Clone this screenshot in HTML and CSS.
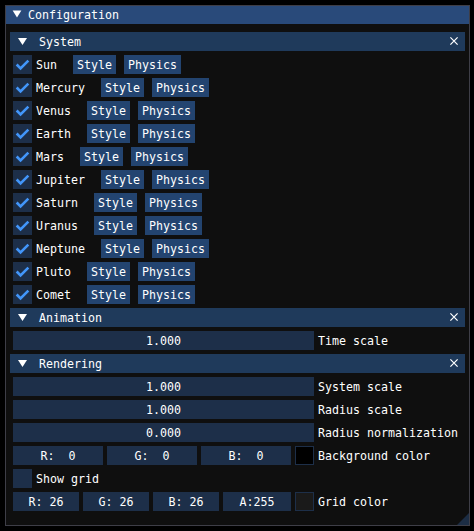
FILE: index.html
```html
<!DOCTYPE html>
<html>
<head>
<meta charset="utf-8">
<link rel="stylesheet" href="styles.css">
</head>
<body>
<div class="window">
  <div class="titlebar">
    <svg class="tri title-tri" width="13" height="13" viewBox="0 0 13 13"><polygon points="1.6,2.5 10.4,2.5 6,9.6" fill="#fff"/></svg>
    <span class="title-text">Configuration</span>
  </div>
  <div class="content">
    <div class="header">
      <svg class="tri head-tri" width="13" height="13" viewBox="0 0 13 13"><polygon points="2,3 11,3 6.5,10" fill="#fff"/></svg>
      <span class="head-text">System</span>
      <svg class="close" width="13" height="13" viewBox="0 0 13 13"><path d="M2.4 2.4 L9.6 9.6 M9.6 2.4 L2.4 9.6" stroke="#fff" stroke-width="1.2"/></svg>
    </div>

    <div class="row"><span class="check on"><svg width="19" height="19" viewBox="0 0 19 19"><polyline points="3.65,9.5 7.55,13.4 15.35,5.6" fill="none" stroke="#4296fa" stroke-width="2.6"/></svg></span><span class="label">Sun</span><span class="btn first">Style</span><span class="btn">Physics</span></div>
    <div class="row"><span class="check on"><svg width="19" height="19" viewBox="0 0 19 19"><polyline points="3.65,9.5 7.55,13.4 15.35,5.6" fill="none" stroke="#4296fa" stroke-width="2.6"/></svg></span><span class="label">Mercury</span><span class="btn first">Style</span><span class="btn">Physics</span></div>
    <div class="row"><span class="check on"><svg width="19" height="19" viewBox="0 0 19 19"><polyline points="3.65,9.5 7.55,13.4 15.35,5.6" fill="none" stroke="#4296fa" stroke-width="2.6"/></svg></span><span class="label">Venus</span><span class="btn first">Style</span><span class="btn">Physics</span></div>
    <div class="row"><span class="check on"><svg width="19" height="19" viewBox="0 0 19 19"><polyline points="3.65,9.5 7.55,13.4 15.35,5.6" fill="none" stroke="#4296fa" stroke-width="2.6"/></svg></span><span class="label">Earth</span><span class="btn first">Style</span><span class="btn">Physics</span></div>
    <div class="row"><span class="check on"><svg width="19" height="19" viewBox="0 0 19 19"><polyline points="3.65,9.5 7.55,13.4 15.35,5.6" fill="none" stroke="#4296fa" stroke-width="2.6"/></svg></span><span class="label">Mars</span><span class="btn first">Style</span><span class="btn">Physics</span></div>
    <div class="row"><span class="check on"><svg width="19" height="19" viewBox="0 0 19 19"><polyline points="3.65,9.5 7.55,13.4 15.35,5.6" fill="none" stroke="#4296fa" stroke-width="2.6"/></svg></span><span class="label">Jupiter</span><span class="btn first">Style</span><span class="btn">Physics</span></div>
    <div class="row"><span class="check on"><svg width="19" height="19" viewBox="0 0 19 19"><polyline points="3.65,9.5 7.55,13.4 15.35,5.6" fill="none" stroke="#4296fa" stroke-width="2.6"/></svg></span><span class="label">Saturn</span><span class="btn first">Style</span><span class="btn">Physics</span></div>
    <div class="row"><span class="check on"><svg width="19" height="19" viewBox="0 0 19 19"><polyline points="3.65,9.5 7.55,13.4 15.35,5.6" fill="none" stroke="#4296fa" stroke-width="2.6"/></svg></span><span class="label">Uranus</span><span class="btn first">Style</span><span class="btn">Physics</span></div>
    <div class="row"><span class="check on"><svg width="19" height="19" viewBox="0 0 19 19"><polyline points="3.65,9.5 7.55,13.4 15.35,5.6" fill="none" stroke="#4296fa" stroke-width="2.6"/></svg></span><span class="label">Neptune</span><span class="btn first">Style</span><span class="btn">Physics</span></div>
    <div class="row"><span class="check on"><svg width="19" height="19" viewBox="0 0 19 19"><polyline points="3.65,9.5 7.55,13.4 15.35,5.6" fill="none" stroke="#4296fa" stroke-width="2.6"/></svg></span><span class="label">Pluto</span><span class="btn first">Style</span><span class="btn">Physics</span></div>
    <div class="row"><span class="check on"><svg width="19" height="19" viewBox="0 0 19 19"><polyline points="3.65,9.5 7.55,13.4 15.35,5.6" fill="none" stroke="#4296fa" stroke-width="2.6"/></svg></span><span class="label">Comet</span><span class="btn first">Style</span><span class="btn">Physics</span></div>

    <div class="header">
      <svg class="tri head-tri" width="13" height="13" viewBox="0 0 13 13"><polygon points="2,3 11,3 6.5,10" fill="#fff"/></svg>
      <span class="head-text">Animation</span>
      <svg class="close" width="13" height="13" viewBox="0 0 13 13"><path d="M2.4 2.4 L9.6 9.6 M9.6 2.4 L2.4 9.6" stroke="#fff" stroke-width="1.2"/></svg>
    </div>
    <div class="row"><span class="slider">1.000</span><span class="label">Time scale</span></div>

    <div class="header">
      <svg class="tri head-tri" width="13" height="13" viewBox="0 0 13 13"><polygon points="2,3 11,3 6.5,10" fill="#fff"/></svg>
      <span class="head-text">Rendering</span>
      <svg class="close" width="13" height="13" viewBox="0 0 13 13"><path d="M2.4 2.4 L9.6 9.6 M9.6 2.4 L2.4 9.6" stroke="#fff" stroke-width="1.2"/></svg>
    </div>
    <div class="row"><span class="slider">1.000</span><span class="label">System scale</span></div>
    <div class="row"><span class="slider">1.000</span><span class="label">Radius scale</span></div>
    <div class="row"><span class="slider">0.000</span><span class="label">Radius normalization</span></div>
    <div class="row gap4">
      <span class="field w90">R:  0</span><span class="field w90">G:  0</span><span class="field w90">B:  0</span>
      <span class="swatch black"></span><span class="label nomargin">Background color</span>
    </div>
    <div class="row"><span class="check"></span><span class="label">Show grid</span></div>
    <div class="row gap4">
      <span class="field w66">R: 26</span><span class="field w66">G: 26</span><span class="field w66">B: 26</span><span class="field w68">A:255</span>
      <span class="swatch grey"></span><span class="label nomargin">Grid color</span>
    </div>
  </div>
  <div class="grip"></div>
</div>
</body>
</html>
```

FILE: styles.css
```css
html, body {
  margin: 0;
  padding: 0;
  background: #000;
}
body {
  padding: 5px 0 0 5px;
  font-family: "DejaVu Sans Mono", "Liberation Mono", monospace;
  font-size: 11.63px;
  color: #fff;
}
.window {
  position: relative;
  box-sizing: border-box;
  width: 465px;
  height: 521px;
  border: 1px solid #3e3e47;
  background: #0f0f0f;
}
.titlebar {
  height: 18px;
  background: #294a7a;
  display: flex;
  align-items: center;
  line-height: 18px;
}
.tri { display: block; flex: none; }
.title-tri { margin-left: 5px; margin-top: -1px; }
.title-text { margin-left: 4px; }
.content {
  padding: 8px 7px 0 7px;
  display: flex;
  flex-direction: column;
  gap: 4px;
}
.header {
  height: 19px;
  margin: 0 -3px;
  background: #1f3a5b;
  display: flex;
  align-items: center;
}
.head-tri { margin-left: 6px; }
.head-text { margin-left: 10px; flex: 1; height: 19px; line-height: 21px; }
.close { display: block; margin-right: 4px; flex: none; }
.row {
  height: 19px;
  display: flex;
  align-items: center;
  white-space: pre;
}
.gap4 { gap: 4px; }
.check {
  width: 19px;
  height: 19px;
  background: #1d2f49;
  flex: none;
}
.check svg { display: block; }
.label { margin-left: 4px; height: 19px; line-height: 21px; }
.label.nomargin { margin-left: 0; }
.btn {
  height: 19px;
  line-height: 21px;
  padding: 0 4px;
  background: #234470;
  margin-left: 8px;
}
.btn.first { margin-left: 16px; }
.slider {
  width: 301px;
  height: 19px;
  line-height: 21px;
  background: #1d2f49;
  text-align: center;
  flex: none;
}
.field {
  height: 19px;
  line-height: 21px;
  background: #1d2f49;
  text-align: center;
  flex: none;
}
.w90 { width: 90px; }
.w66 { width: 66px; }
.w68 { width: 68px; }
.swatch {
  box-sizing: border-box;
  width: 19px;
  height: 19px;
  border: 1px solid #1d2f49;
  flex: none;
}
.swatch.black { background: #000; }
.swatch.grey { background: #1a1a1a; }
.grip {
  position: absolute;
  right: 0;
  bottom: 0;
  width: 12px;
  height: 12px;
  background: #1c2d44;
  clip-path: polygon(100% 0, 100% 100%, 0 100%);
}
```
